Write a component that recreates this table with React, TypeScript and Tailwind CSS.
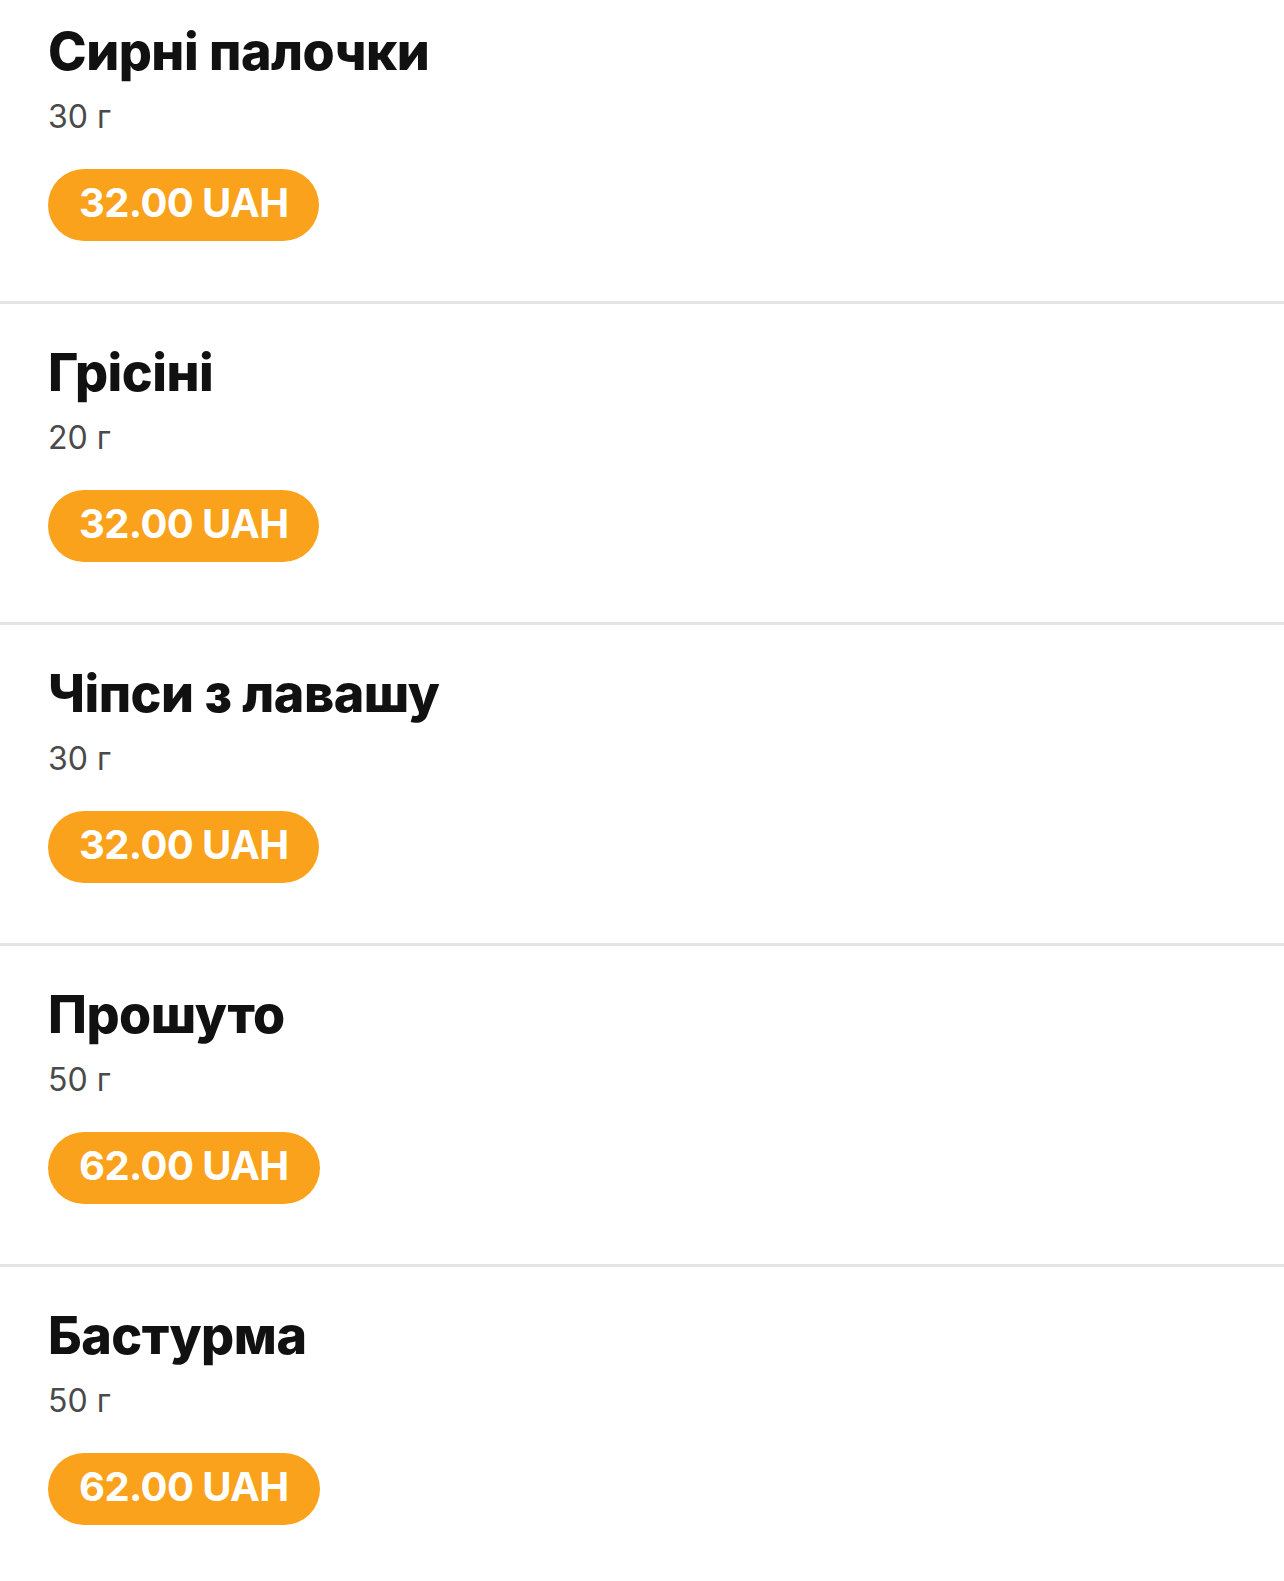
const items = [
  { name: 'Сирні палочки', weight: '30 г', price: '32.00 UAH' },
  { name: 'Грісіні', weight: '20 г', price: '32.00 UAH' },
  { name: 'Чіпси з лавашу', weight: '30 г', price: '32.00 UAH' },
  { name: 'Прошуто', weight: '50 г', price: '62.00 UAH' },
  { name: 'Бастурма', weight: '50 г', price: '62.00 UAH' },
];

export default function App() {
  return (
    <div className="min-h-screen bg-white font-['Inter',sans-serif]">
      {items.map((item, i) => (
        <div
          key={item.name}
          className={`px-[48px] pb-[60px] ${i === 0 ? 'pt-[20px]' : 'pt-[37px]'} ${
            i < items.length - 1 ? 'border-b-[3px] border-[#e4e4e4]' : ''
          }`}
        >
          <h2 className="text-[52px] leading-[64px] font-extrabold text-[#111111] tracking-[-0.5px]">{item.name}</h2>
          <p className="mt-[13px] text-[32px] leading-[40px] text-[#4a4a4a]">{item.weight}</p>
          <div className="mt-[32px] inline-flex h-[72px] items-start rounded-full bg-[#faa21b] px-[31px]">
            <span className="text-[40px] leading-[67px] font-bold text-white tracking-[-0.6px]">{item.price}</span>
          </div>
        </div>
      ))}
    </div>
  );
}
